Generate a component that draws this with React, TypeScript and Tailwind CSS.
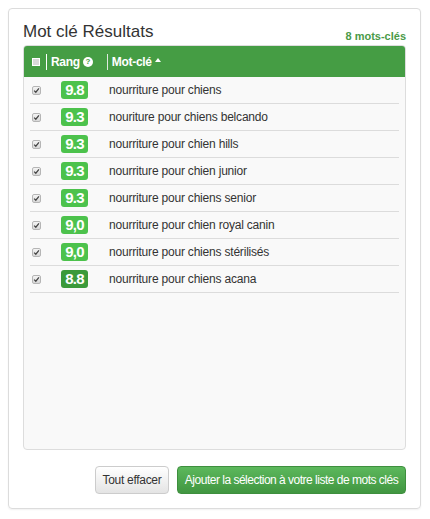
import React from "react";

const keywords = [
    { score: "9.8", text: "nourriture pour chiens", dark: false },
    { score: "9.3", text: "nouriture pour chiens belcando", dark: false },
    { score: "9.3", text: "nourriture pour chien hills", dark: false },
    { score: "9.3", text: "nourriture pour chien junior", dark: false },
    { score: "9.3", text: "nourriture pour chiens senior", dark: false },
    { score: "9,0", text: "nourriture pour chien royal canin", dark: false },
    { score: "9,0", text: "nourriture pour chiens stérilisés", dark: false },
    { score: "8.8", text: "nourriture pour chiens acana", dark: true },
];

function CheckBox({ checked }: { checked: boolean }) {
    return (
        <span className="flex h-[9px] w-[9px] items-center justify-center rounded-[2px] border border-[#b5b5b5] bg-gradient-to-b from-[#f4f4f4] to-[#d8d8d8]">
            {checked && (
                <svg width="7" height="7" viewBox="0 0 8 8">
                    <path d="M1.3 4.2 L3.2 6 L6.8 1.5" fill="none" stroke="#444" strokeWidth="1.4" />
                </svg>
            )}
        </span>
    );
}

export default function App() {
    return (
        <div className="h-[519px] w-[430px] bg-white pl-[8px] pt-[8px]" style={{ fontFamily: '"Liberation Sans", Arial, sans-serif' }}>
            <div className="flex h-[501px] w-[413px] flex-col rounded-[4px] border border-[#dcdcdc] px-[14px] pb-[14px] shadow-[0_1px_2px_rgba(0,0,0,0.06)]">
                {/* Title */}
                <div className="flex h-[36px] items-end justify-between pb-[3px]">
                    <span className="text-[17px] leading-[20px] text-[#333]">Mot clé Résultats</span>
                    <span className="text-[11px] font-bold leading-[12px] text-[#4a9a48]">8 mots-clés</span>
                </div>

                {/* Table */}
                <div className="flex h-[405px] flex-col overflow-hidden rounded-[4px] border border-[#dddddd] bg-[#f9f9f9]">
                    <div className="flex h-[31px] shrink-0 items-center bg-[#459d44] text-[12px] font-bold text-white">
                        <span className="ml-[8px] h-[8px] w-[8px] border border-white bg-[#d9d9d9]" />
                        <span className="ml-[6px] h-[16px] w-px bg-white" />
                        <span className="ml-[4px] flex items-center gap-[3px] tracking-[-0.3px]">
                            Rang
                            <span className="flex h-[10px] w-[10px] items-center justify-center rounded-full bg-white text-[8px] font-bold leading-none text-[#459d44]">?</span>
                        </span>
                        <span className="ml-[14px] h-[16px] w-px bg-[#dfe9df]" />
                        <span className="ml-[4px] flex items-center gap-[3px] tracking-[-0.3px]">
                            Mot-clé
                            <svg width="6" height="4" viewBox="0 0 6 4" className="mb-[3px]">
                                <path d="M0 4 L3 0 L6 4 Z" fill="white" />
                            </svg>
                        </span>
                    </div>

                    <div className="flex flex-col px-[6px]">
                        {keywords.map((k, i) => (
                            <div key={i} className="flex h-[27px] items-center border-b border-[#dcdcdc]">
                                <span className="ml-[2px]">
                                    <CheckBox checked />
                                </span>
                                <span
                                    className={`ml-[20px] flex h-[18px] w-[27px] items-center justify-center rounded-[3px] text-[15px] font-bold tracking-[-0.8px] text-white ${k.dark ? "bg-[#3b9a3a]" : "bg-[#4cc24c]"}`}
                                >
                                    {k.score}
                                </span>
                                <span className="ml-[21px] text-[12px] tracking-[-0.2px] text-[#333]">{k.text}</span>
                            </div>
                        ))}
                    </div>
                </div>

                {/* Buttons */}
                <div className="mt-auto flex justify-end gap-[8px]">
                    <button className="h-[28px] w-[74px] whitespace-nowrap rounded-[4px] border border-[#cccccc] bg-gradient-to-b from-white to-[#e4e4e4] text-[12px] tracking-[-0.3px] text-[#333]">
                        Tout effacer
                    </button>
                    <button className="h-[28px] w-[229px] whitespace-nowrap rounded-[4px] border border-[#3e8f3e] bg-gradient-to-b from-[#5cb85c] to-[#419641] text-[12px] tracking-[-0.5px] text-white">
                        Ajouter la sélection à votre liste de mots clés
                    </button>
                </div>
            </div>
        </div>
    );
}
